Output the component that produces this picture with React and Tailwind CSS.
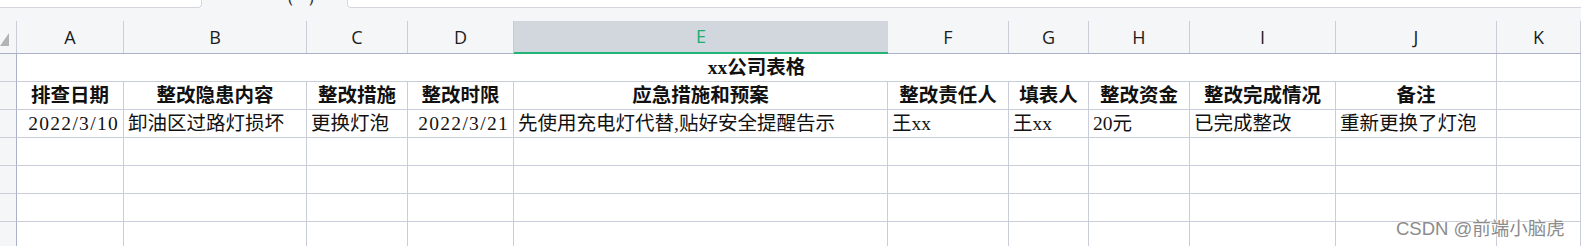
import React from "react";

const cols = ["A", "B", "C", "D", "E", "F", "G", "H", "I", "J", "K"];

const heads = [
  "排查日期",
  "整改隐患内容",
  "整改措施",
  "整改时限",
  "应急措施和预案",
  "整改责任人",
  "填表人",
  "整改资金",
  "整改完成情况",
  "备注",
];

const data = [
  { v: "2022/3/10", right: true },
  { v: "卸油区过路灯损坏" },
  { v: "更换灯泡" },
  { v: "2022/3/21", right: true },
  { v: "先使用充电灯代替,贴好安全提醒告示" },
  { v: "王xx" },
  { v: "王xx" },
  { v: "20元" },
  { v: "已完成整改" },
  { v: "重新更换了灯泡" },
];

const gridCols =
  "grid grid-cols-[17px_107px_183px_101px_106px_374px_121px_80px_101px_146px_161px_1fr]";

const cellFont = {
  fontFamily: '"Liberation Serif", "Noto Sans CJK SC", serif',
};

const RowHead = () => (
  <div className="h-[28px] bg-[#f5f6f8] border-r border-r-[#a9b2c6] border-b border-b-[#c8cdd9]" />
);

const Cell = ({ children, className = "" }) => (
  <div
    className={`h-[28px] border-r border-b border-[#c8cdd9] flex items-center overflow-hidden whitespace-nowrap text-[19.5px] text-[#111] ${className}`}
    style={cellFont}
  >
    {children}
  </div>
);

export default function App() {
  return (
    <div className="relative w-[1581px] h-[246px] overflow-hidden bg-white">
      {/* tab strip */}
      <div className="flex h-[8px]">
        <div className="w-[202px] border-b border-r border-[#d3d6dc] rounded-br-[4px] bg-white" />
        <div className="relative w-[145px] bg-[#f5f6f8] overflow-hidden">
          <span
            className="absolute left-[86px] top-[-15px] text-[16px] text-[#333] tracking-[6px]"
            style={{ fontFamily: '"Noto Sans", sans-serif' }}
          >
            ( )
          </span>
        </div>
        <div className="flex-1 border-b border-l border-[#d3d6dc] rounded-bl-[4px] bg-white" />
      </div>

      {/* column header area */}
      <div className="bg-[#f5f6f8] pt-[13px]">
        <div
          className={`${gridCols} h-[33px] border-b border-[#a9b2c6]`}
          style={{ fontFamily: '"Open Sans", "Noto Sans", sans-serif' }}
        >
          <div className="relative border-r border-[#c8cdd9]">
            <svg
              className="absolute left-0 top-[12px]"
              width="10"
              height="13"
              viewBox="0 0 10 13"
            >
              <polygon points="0,13 9,13 9,0" fill="#b3b3b3" />
            </svg>
          </div>
          {cols.map((c) =>
            c === "E" ? (
              <div
                key={c}
                className="flex items-center justify-center bg-[#d2d6dd] text-[#21ac72] text-[18px] border-b-2 border-[#22b477] mb-[-1px]"
              >
                {c}
              </div>
            ) : (
              <div
                key={c}
                className="flex items-center justify-center text-[18px] text-[#1c1c1c] border-r border-[#c8cdd9]"
              >
                {c}
              </div>
            )
          )}
        </div>
      </div>

      {/* sheet rows */}
      <div className={gridCols}>
        {/* title row */}
        <RowHead />
        <Cell className="col-span-10 justify-center font-bold">xx公司表格</Cell>
        <Cell />

        {/* header row */}
        <RowHead />
        {heads.map((h) => (
          <Cell key={h} className="justify-center font-bold">
            {h}
          </Cell>
        ))}
        <Cell />

        {/* data row */}
        <RowHead />
        {data.map((d, i) => (
          <Cell
            key={i}
            className={
              d.right ? "justify-end pr-[4px] tracking-[1.3px]" : "pl-[4px]"
            }
          >
            {d.v}
          </Cell>
        ))}
        <Cell />

        {/* empty rows */}
        {[0, 1, 2, 3].map((r) => (
          <React.Fragment key={r}>
            <RowHead />
            {cols.map((c) => (
              <Cell key={c} />
            ))}
          </React.Fragment>
        ))}
      </div>

      {/* watermark */}
      <div
        className="absolute left-[1396px] top-[217px] text-[18.5px] leading-[24px] text-[#8c8c8c] whitespace-nowrap"
        style={{
          fontFamily: '"Liberation Sans", "Noto Sans CJK SC", sans-serif',
          textShadow: "0 0 2px #fff, 0 0 2px #fff",
        }}
      >
        CSDN @前端小脑虎
      </div>
    </div>
  );
}
